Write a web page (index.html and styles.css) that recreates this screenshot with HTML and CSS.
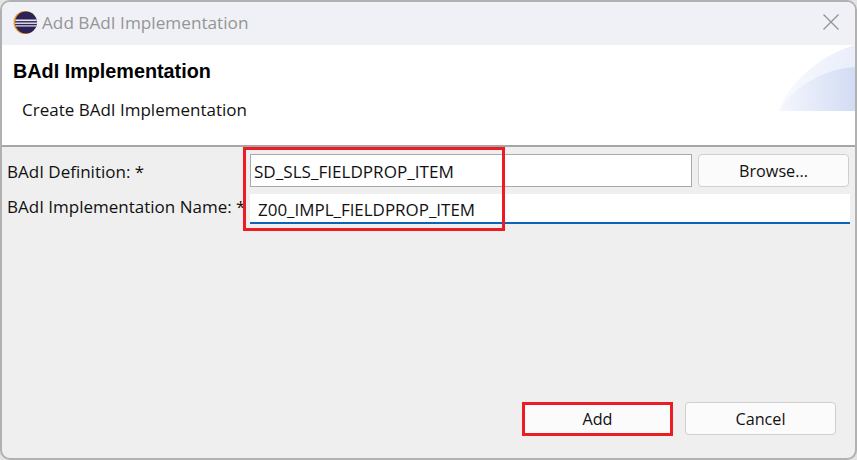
FILE: index.html
```html
<!DOCTYPE html>
<html lang="en">
<head>
<meta charset="utf-8">
<title>Add BAdI Implementation</title>
<link rel="stylesheet" href="styles.css">
</head>
<body>
<div class="window">
  <header class="titlebar">
    <svg class="logo" width="24" height="23" viewBox="0 0 24 23">
      <defs><clipPath id="disc"><circle cx="13" cy="11.5" r="11"/></clipPath></defs>
      <circle cx="12" cy="11.5" r="11.5" fill="#f39a2b"/>
      <circle cx="13" cy="11.5" r="11" fill="#2c2255"/>
      <g clip-path="url(#disc)" fill="#e8e6f2">
        <rect x="0" y="8.5" width="24" height="1.6"/>
        <rect x="0" y="11.5" width="24" height="1.4"/>
        <rect x="0" y="14.3" width="24" height="1.2"/>
      </g>
    </svg>
    <span class="title">Add BAdI Implementation</span>
    <svg class="close" width="16" height="16" viewBox="0 0 16 16"><path d="M0.5 0.5L15.5 15.5M15.5 0.5L0.5 15.5" stroke="#8f9195" stroke-width="1.2" fill="none"/></svg>
  </header>
  <section class="banner">
    <h1 class="banner-title">BAdI Implementation</h1>
    <p class="banner-sub">Create BAdI Implementation</p>
    <svg class="swoosh" width="76" height="66" viewBox="0 0 76 66">
      <defs>
        <linearGradient id="g1" x1="0" x2="1" y1="0" y2="0"><stop offset="0" stop-color="#f9fafe"/><stop offset="1" stop-color="#e9eefa"/></linearGradient>
        <linearGradient id="g2" x1="0" x2="1" y1="0" y2="0"><stop offset="0" stop-color="#f5f7fd"/><stop offset="1" stop-color="#d2dcf3"/></linearGradient>
      </defs>
      <path d="M0 66C8 38 42 10 76 0V66Z" fill="url(#g1)"/>
      <path d="M0 66C14 42 44 24 76 22V66Z" fill="url(#g2)"/>
    </svg>
  </section>
  <main class="content">
    <div class="form">
      <label class="label label-first">BAdI Definition: *</label>
      <div class="field field-def">SD_SLS_FIELDPROP_ITEM</div>
      <button class="btn btn-browse" type="button">Browse...</button>
      <label class="label label-second">BAdI Implementation Name: *</label>
      <div class="field field-name">Z00_IMPL_FIELDPROP_ITEM</div>
    </div>
    <footer class="actions">
      <button class="btn btn-add" type="button">Add</button>
      <button class="btn btn-cancel" type="button">Cancel</button>
    </footer>
    <div class="mark mark-fields"></div>
  </main>
</div>
</body>
</html>
```
FILE: styles.css
```css
* { box-sizing: border-box; }
html, body { margin: 0; height: 100%; }
body {
  background: #e4e4e4;
  padding: 0;
  font-family: "Open Sans", "Noto Sans", sans-serif;
  font-size: 17px;
  color: #111;
  overflow: hidden;
}
.window {
  width: 857px;
  height: 460px;
  border: 2px solid #b1b1b1;
  border-radius: 10px;
  overflow: hidden;
  display: flex;
  flex-direction: column;
  background: #efefef;
}
.titlebar {
  height: 43px;
  flex: none;
  background: #eff1f6;
  display: flex;
  align-items: center;
  padding: 0 16px 3px 11px;
}
.logo { flex: none; }
.title {
  margin-left: 5px;
  font-size: 17.2px;
  color: #959595;
  flex: 1;
}
.close { flex: none; }
.banner {
  position: relative;
  height: 102px;
  flex: none;
  background: #fff;
  border-bottom: 2px solid #a6a6a6;
  padding: 15px 11px 0;
}
.banner-title {
  margin: 0;
  font-size: 19.8px;
  line-height: 22px;
  font-weight: 700;
  color: #000;
  font-family: "Liberation Sans", sans-serif;
}
.banner-sub {
  margin: 17px 0 0 9px;
  line-height: 22px;
  font-size: 17px;
}
.swoosh { position: absolute; right: 0; top: 0; }
.content {
  position: relative;
  flex: 1;
  display: flex;
  flex-direction: column;
  justify-content: space-between;
  padding: 7px 6px 22px 5px;
}
.form {
  display: grid;
  grid-template-columns: 243px 442px 151px;
  grid-template-rows: 33px 30px;
  column-gap: 0;
  row-gap: 7px;
  align-items: start;
}
.label { line-height: 22px; white-space: nowrap; font-size: 17px; }
.label-first { margin-top: 7px; }
.label-second { margin-top: 2px; }
.field {
  background: #fff;
  height: 33px;
  line-height: 33px;
  white-space: nowrap;
  font-size: 17.1px;
}
.field-def {
  border: 1px solid #a9a9a9;
  padding-left: 3px;
}
.field-name {
  grid-column: 2 / 4;
  width: 600px;
  height: 30px;
  padding: 0 0 0 8px;
  border-bottom: 2px solid #0a64b8;
  line-height: 31px;
  font-size: 16.95px;
}
.btn {
  font: inherit;
  font-size: 16.2px;
  color: #111;
  background: #fbfbfb;
  border: 1px solid #cfcfcf;
  border-radius: 4px;
  height: 33px;
  padding: 0;
}
.btn-browse { margin-left: 6px; width: 151px; padding-top: 1px; }
.actions {
  display: flex;
  justify-content: flex-end;
  align-items: flex-start;
  gap: 12px;
  padding-right: 13px;
  height: 34px;
}
.btn-add {
  width: 151px;
  height: 34px;
  border: 3px solid #ed1c24;
  border-radius: 0;
}
.btn-cancel { width: 151px; }
.mark-fields {
  position: absolute;
  left: 241px;
  top: 0;
  width: 262px;
  height: 84px;
  border: 3px solid #ed1c24;
  pointer-events: none;
}
```
